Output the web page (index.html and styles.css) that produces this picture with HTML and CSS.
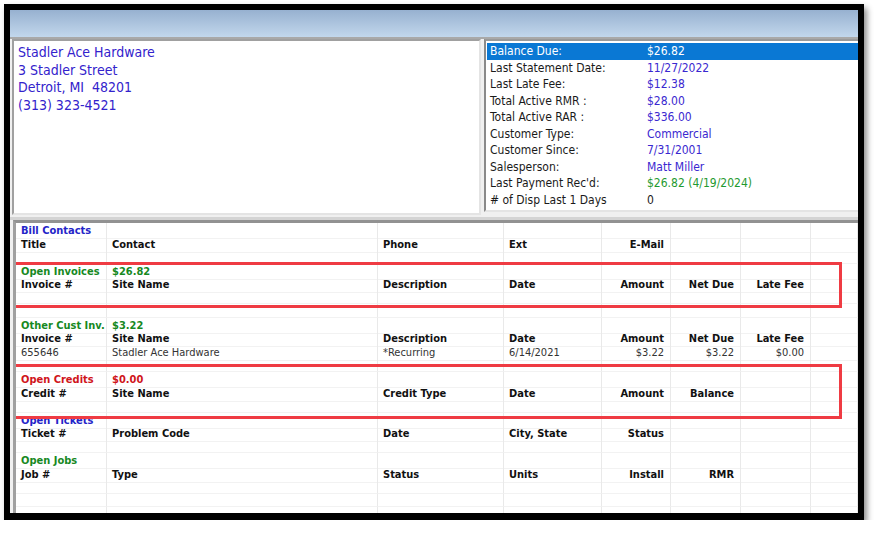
FILE: index.html
```html
<!DOCTYPE html>
<html>
<head>
<meta charset="utf-8">
<link rel="stylesheet" href="styles.css">
</head>
<body>
<div class="frame">
  <div class="titlebar"></div>
  <div class="top">
    <div class="address">
      <div>Stadler Ace Hardware</div>
      <div>3 Stadler Street</div>
      <div>Detroit, MI&nbsp; 48201</div>
      <div>(313) 323-4521</div>
    </div>
    <div class="summary">
      <div class="srow selected"><span class="lbl">Balance Due:</span><span class="val">$26.82</span></div>
      <div class="srow"><span class="lbl">Last Statement Date:</span><span class="val">11/27/2022</span></div>
      <div class="srow"><span class="lbl">Last Late Fee:</span><span class="val">$12.38</span></div>
      <div class="srow"><span class="lbl">Total Active RMR :</span><span class="val">$28.00</span></div>
      <div class="srow"><span class="lbl">Total Active RAR :</span><span class="val">$336.00</span></div>
      <div class="srow"><span class="lbl">Customer Type:</span><span class="val">Commercial</span></div>
      <div class="srow"><span class="lbl">Customer Since:</span><span class="val">7/31/2001</span></div>
      <div class="srow"><span class="lbl">Salesperson:</span><span class="val">Matt Miller</span></div>
      <div class="srow"><span class="lbl">Last Payment Rec'd:</span><span class="val green">$26.82 (4/19/2024)</span></div>
      <div class="srow"><span class="lbl"># of Disp Last 1 Days</span><span class="val plain">0</span></div>
    </div>
  </div>
  <div class="splitter"></div>
  <div class="grid">
    <div class="row t-blue"><span>Bill Contacts</span><span></span><span></span><span></span><span></span><span></span><span></span><span></span></div>
    <div class="row hdr"><span>Title</span><span>Contact</span><span>Phone</span><span>Ext</span><span class="r">E-Mail</span><span></span><span></span><span></span></div>
    <div class="row"><span></span><span></span><span></span><span></span><span></span><span></span><span></span><span></span></div>
    <div class="row t-green"><span>Open Invoices</span><span>$26.82</span><span></span><span></span><span></span><span></span><span></span><span></span></div>
    <div class="row hdr"><span>Invoice #</span><span>Site Name</span><span>Description</span><span>Date</span><span class="r">Amount</span><span class="r">Net Due</span><span class="r">Late Fee</span><span></span></div>
    <div class="row"><span></span><span></span><span></span><span></span><span></span><span></span><span></span><span></span></div>
    <div class="row"><span></span><span></span><span></span><span></span><span></span><span></span><span></span><span></span></div>
    <div class="row t-green"><span>Other Cust Inv.</span><span>$3.22</span><span></span><span></span><span></span><span></span><span></span><span></span></div>
    <div class="row hdr"><span>Invoice #</span><span>Site Name</span><span>Description</span><span>Date</span><span class="r">Amount</span><span class="r">Net Due</span><span class="r">Late Fee</span><span></span></div>
    <div class="row data"><span>655646</span><span>Stadler Ace Hardware</span><span>*Recurring</span><span>6/14/2021</span><span class="r">$3.22</span><span class="r">$3.22</span><span class="r">$0.00</span><span></span></div>
    <div class="row"><span></span><span></span><span></span><span></span><span></span><span></span><span></span><span></span></div>
    <div class="row t-red"><span>Open Credits</span><span>$0.00</span><span></span><span></span><span></span><span></span><span></span><span></span></div>
    <div class="row hdr"><span>Credit #</span><span>Site Name</span><span>Credit Type</span><span>Date</span><span class="r">Amount</span><span class="r">Balance</span><span></span><span></span></div>
    <div class="row"><span></span><span></span><span></span><span></span><span></span><span></span><span></span><span></span></div>
    <div class="row t-blue"><span>Open Tickets</span><span></span><span></span><span></span><span></span><span></span><span></span><span></span></div>
    <div class="row hdr"><span>Ticket #</span><span>Problem Code</span><span>Date</span><span>City, State</span><span class="r">Status</span><span></span><span></span><span></span></div>
    <div class="row"><span></span><span></span><span></span><span></span><span></span><span></span><span></span><span></span></div>
    <div class="row t-green"><span>Open Jobs</span><span></span><span></span><span></span><span></span><span></span><span></span><span></span></div>
    <div class="row hdr"><span>Job #</span><span>Type</span><span>Status</span><span>Units</span><span class="r">Install</span><span class="r">RMR</span><span></span><span></span></div>
    <div class="row"><span></span><span></span><span></span><span></span><span></span><span></span><span></span><span></span></div>
    <div class="row"><span></span><span></span><span></span><span></span><span></span><span></span><span></span><span></span></div>
    <div class="row"><span></span><span></span><span></span><span></span><span></span><span></span><span></span><span></span></div>
    <div class="hl hl-inv"></div>
    <div class="hl hl-cred"></div>
  </div>
</div>
</body>
</html>
```
FILE: styles.css
```css
* { box-sizing: border-box; }
body {
  margin: 0;
  background: #fff;
  font-family: "DejaVu Sans Condensed", "DejaVu Sans", sans-serif;
  font-stretch: condensed;
}
.frame {
  margin: 4px 0 0 4px;
  width: 860px;
  height: 516px;
  border: 6px solid #000;
  border-bottom-width: 7px;
  box-shadow: 3px 4px 6px rgba(0, 0, 0, 0.45);
  background: #f0f0f0;
  display: flex;
  flex-direction: column;
  overflow: hidden;
}
.titlebar {
  height: 29px;
  flex: none;
  background: linear-gradient(#97b1d0, #c2d7ec);
  border-bottom: 2px solid #a9a9a9;
}
.top {
  height: 178px;
  flex: none;
  display: flex;
  align-items: flex-start;
  gap: 3px;
  padding-left: 2px;
}
.address {
  width: 469px;
  height: 176px;
  background: #fff;
  border-left: 2px solid #a0a0a0;
  border-top: 2px solid #a0a0a0;
  border-right: 2px solid #e4e4e4;
  border-bottom: 2px solid #e4e4e4;
  padding: 3px 0 0 4px;
  color: #3322cc;
  font-size: 14px;
  line-height: 17.5px;
}
.summary {
  flex: 1;
  height: 173px;
  background: #fff;
  border-left: 2px solid #8a8a8a;
  border-top: 2px solid #9a9a9a;
  border-bottom: 2px solid #e4e4e4;
  padding: 2px 0 0 1px;
  font-size: 12px;
}
.srow {
  height: 16.5px;
  line-height: 16.5px;
  display: flex;
  padding-left: 3px;
  color: #1a1a1a;
  white-space: nowrap;
}
.srow .lbl { width: 157px; }
.srow .val { color: #3a28d0; }
.srow .val.green { color: #1f9a2f; }
.srow .val.plain { color: #1a1a1a; }
.srow.selected { background: #0a78d4; color: #fff; }
.srow.selected .val { color: #fff; }
.splitter {
  height: 3px;
  flex: none;
  background: #d4d4d4;
}
.grid {
  position: relative;
  flex: 1;
  margin-left: 3px;
  background: #fff;
  border-top: 3px solid #929292;
  border-left: 3px solid #a0a0a0;
  font-size: 11px;
  overflow: hidden;
}
.row {
  display: grid;
  grid-template-columns: 91px 271px 126px 98px 69px 70px 70px 1fr;
  height: 13.55px;
  line-height: 15px;
}
.row span {
  border-right: 1px solid #e9e9e9;
  border-bottom: 1px solid #f2f2f2;
  padding: 0 5px;
  white-space: nowrap;
  min-width: 0;
}
.row span.r { text-align: right; padding-right: 6px; }
.hdr { font-weight: bold; color: #111; }
.data { color: #333; }
.t-blue { font-weight: bold; color: #2424c8; }
.t-green { font-weight: bold; color: #17891f; }
.t-red { font-weight: bold; color: #d0151b; }
.hl {
  position: absolute;
  left: -3px;
  width: 829px;
  border: 3px solid #ef3b43;
}
.hl-inv { top: 39px; height: 46px; }
.hl-cred { top: 141px; height: 55px; }
```
